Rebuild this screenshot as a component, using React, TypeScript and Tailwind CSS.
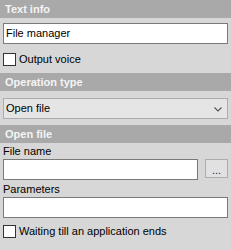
import React from "react";

const font = { fontFamily: '"Liberation Sans", Arial, sans-serif' };

function Header({ children }: { children: React.ReactNode }) {
  return (
    <div className="h-[18px] bg-[#a9a9a9] pl-[5px] flex items-center text-[11px] font-bold text-[#f4f4f4] leading-none">
      {children}
    </div>
  );
}

function Check({ label }: { label: string }) {
  return (
    <div className="flex items-center h-[13px] pl-[3px] gap-[3px]">
      <div className="w-[13px] h-[13px] border border-[#333333] bg-white box-border" />
      <span className="text-[11px] text-black leading-none">{label}</span>
    </div>
  );
}

export default function App() {
  return (
    <div className="w-[231px] h-[250px] bg-[#d7d7d7] overflow-hidden" style={font}>
      <Header>Text info</Header>
      <div className="pt-[5px] px-[3px]">
        <div className="h-[21px] border border-[#7a7a7a] bg-white flex items-center pl-[2px] text-[11px] text-black leading-none">
          File manager
        </div>
      </div>
      <div className="mt-[9px]">
        <Check label="Output voice" />
      </div>
      <div className="mt-[7px]">
        <Header>Operation type</Header>
      </div>
      <div className="pt-[7px] px-[3px]">
        <div className="h-[21px] border border-[#acacac] bg-[#e5e5e5] flex items-center justify-between pl-[2px] pr-[5px] text-[11px] text-black leading-none">
          <span>Open file</span>
          <svg width="8" height="5" viewBox="0 0 8 5" className="mt-[1px]">
            <path d="M0.5 0.5 L4 4 L7.5 0.5" fill="none" stroke="#555" strokeWidth="1.1" />
          </svg>
        </div>
      </div>
      <div className="mt-[6px]">
        <Header>Open file</Header>
      </div>
      <div className="px-[3px]">
        <div className="h-[16px] flex items-center text-[11px] text-black leading-none">File name</div>
        <div className="flex gap-[7px]">
          <div className="flex-1 h-[21px] border border-[#7a7a7a] bg-white" />
          <div className="w-[23px] h-[19px] border border-[#adadad] bg-[#e1e1e1] flex items-center justify-center text-[11px] text-[#202060] leading-none pt-[3px]">
            ...
          </div>
        </div>
        <div className="h-[17px] flex items-center text-[11px] text-black leading-none pt-[2px]">Parameters</div>
        <div className="h-[21px] border border-[#7a7a7a] bg-white" />
      </div>
      <div className="mt-[7px]">
        <Check label="Waiting till an application ends" />
      </div>
    </div>
  );
}
